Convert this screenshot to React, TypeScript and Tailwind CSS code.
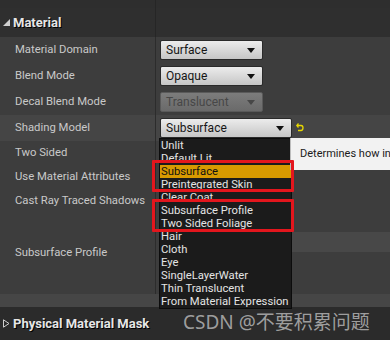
import React from "react";

const SHADING = [
  "Unlit",
  "Default Lit",
  "Subsurface",
  "Preintegrated Skin",
  "Clear Coat",
  "Subsurface Profile",
  "Two Sided Foliage",
  "Hair",
  "Cloth",
  "Eye",
  "SingleLayerWater",
  "Thin Translucent",
  "From Material Expression",
];

function Arrow({ color = "#111" }: { color?: string }) {
  return (
    <svg width="8" height="5" viewBox="0 0 8 5">
      <path d="M0 0 L8 0 L4 5 Z" fill={color} />
    </svg>
  );
}

function Combo({ label, width = 103, disabled = false }: { label: string; width?: number; disabled?: boolean }) {
  return (
    <div
      style={{ width }}
      className={`h-[20px] flex items-center justify-between pl-[5px] pr-[7px] rounded-[2px] border ${
        disabled
          ? "border-[#5a5a5a] bg-gradient-to-b from-[#7c7c7c] to-[#6a6a6a] text-[#474747]"
          : "border-[#2a2a2a] bg-gradient-to-b from-[#ececec] to-[#c6c6c6] text-[#161616]"
      }`}
    >
      <span className="text-[12px] leading-none">{label}</span>
      <Arrow color={disabled ? "#474747" : "#111"} />
    </div>
  );
}

function Row({ label, h, children, bg = "bg-[#3d3d3d]" }: { label: string; h: string; children?: React.ReactNode; bg?: string }) {
  return (
    <div className={`flex ${h} ${bg}`}>
      <div className="w-[155px] flex items-center pl-[15px] text-[11.3px] text-[#c9c9c9] whitespace-nowrap">{label}</div>
      <div className="w-px bg-[#2c2c2c]" />
      <div className="flex-1 flex items-center pl-[4px]">{children}</div>
    </div>
  );
}

export default function App() {
  return (
    <div className="relative w-[390px] h-[340px] overflow-hidden bg-[#3d3d3d]" style={{ fontFamily: "Roboto, 'Noto Sans', sans-serif" }}>
      {/* top strip */}
      <div className="flex h-[8px] bg-[#2e2e2e]">
        <div className="w-[155px]" />
        <div className="w-px bg-[#262626]" />
      </div>
      {/* category header */}
      <div className="flex h-[29px] bg-[#2f2f2f]">
        <div className="w-[155px] flex items-center pl-[3px] gap-[3px]">
          <svg width="7" height="7" viewBox="0 0 7 7">
            <path d="M7 0 L7 7 L0 7 Z" fill="#cfcfcf" />
          </svg>
          <span className="text-[13px] font-bold text-[#e6e6e6] [text-shadow:1px_1px_0_#000]">Material</span>
        </div>
        <div className="w-px bg-[#262626]" />
      </div>

      <Row label="Material Domain" h="h-[26px]">
        <Combo label="Surface" />
      </Row>
      <Row label="Blend Mode" h="h-[26px]">
        <Combo label="Opaque" />
      </Row>
      <Row label="Decal Blend Mode" h="h-[26px]">
        <Combo label="Translucent" disabled />
      </Row>
      <Row label="Shading Model" h="h-[26px]" bg="bg-[#454545]">
        <Combo label="Subsurface" width={132} />
        <svg width="8" height="9" viewBox="0 0 8 9" className="ml-[4px] mt-[-2px]">
          <path d="M2.5 0.5 L0.8 2.5 L2.5 4.5" stroke="#e8d800" strokeWidth="1.3" fill="none" />
          <path d="M1 2.5 L5 2.5 Q7 2.5 7 4.8 Q7 7.5 5 7.5 L2 7.5" stroke="#e8d800" strokeWidth="1.3" fill="none" />
        </svg>
      </Row>
      <Row label="Two Sided" h="h-[24px]" />
      <Row label="Use Material Attributes" h="h-[24px]" />
      <Row label="Cast Ray Traced Shadows" h="h-[24px]" />
      <Row label="Subsurface Profile" h="h-[81px]">
        <div className="flex-1 h-full flex flex-col">
          <div className="h-[19px]" />
          <div className="h-[20px] bg-[#484848]" />
        </div>
      </Row>
      <div className="h-[13px] bg-[#464646]" />
      <div className="h-[33px] bg-[#2b2b2b] flex items-center pl-[3px] gap-[3px]">
        <svg width="7" height="9" viewBox="0 0 7 9">
          <path d="M0.5 0.8 L6 4.5 L0.5 8.2 Z" fill="none" stroke="#cfcfcf" strokeWidth="1" />
        </svg>
        <span className="text-[13px] font-bold text-[#e6e6e6] [text-shadow:1px_1px_0_#000]">Physical Material Mask</span>
      </div>

      {/* dropdown menu */}
      <div className="absolute left-[159px] top-[138px] w-[133px] bg-[#1b1b1b] border border-[#0c0c0c]">
        {SHADING.map((s) => (
          <div
            key={s}
            className={`h-[13px] flex items-center pl-[1px] text-[11.25px] leading-none ${
              s === "Subsurface" ? "bg-[#d89a00] text-[#111]" : "text-[#e4e4e4]"
            }`}
          >
            {s}
          </div>
        ))}
      </div>

      {/* tooltip */}
      <div className="absolute left-[290px] top-[138px] w-[100px] h-[32px] bg-[#f2f2f2] border-l border-[#bdbdbd] flex items-center pl-[9px] text-[11px] text-[#1a1a1a] whitespace-nowrap overflow-hidden">
        Determines how in
      </div>

      {/* annotations */}
      <div className="absolute left-[152px] top-[160px] w-[142px] h-[32px] border-[3px] border-[#e3161d] rounded-[1px]" />
      <div className="absolute left-[152px] top-[199px] w-[142px] h-[33px] border-[3px] border-[#e3161d] rounded-[1px]" />

      {/* watermark */}
      <div
        className="absolute left-[183px] top-[308px] text-[19px] text-[#bdbdbd]/80 whitespace-nowrap"
        style={{ fontFamily: "'Noto Sans', 'Noto Sans CJK SC', sans-serif" }}
      >
        CSDN @不要积累问题
      </div>
    </div>
  );
}
